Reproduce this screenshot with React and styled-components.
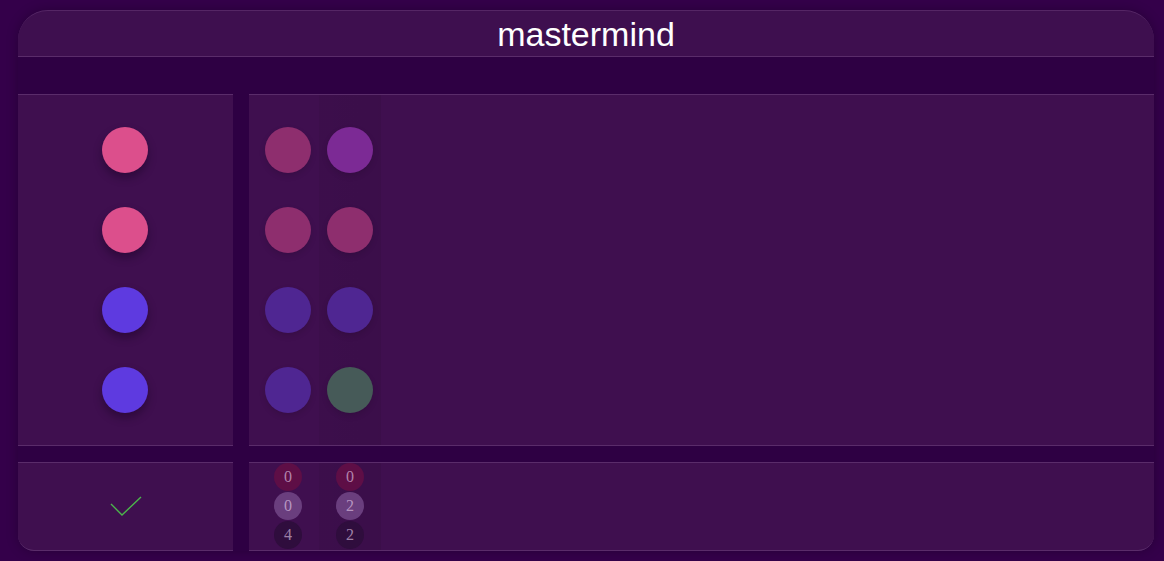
import styled, { createGlobalStyle } from "styled-components";

const GlobalStyle = createGlobalStyle`
  html, body {
    margin: 0;
    padding: 0;
    background: #34004a;
    font-family: "Liberation Sans", Arial, sans-serif;
  }
`;

const Board = styled.div`
  padding: 10px 10px 0 18px;
  height: 561px;
  box-sizing: border-box;
  overflow: hidden;
`;

const Frame = styled.div`
  background: #2e0043;
  display: flex;
  flex-direction: column;
  border-radius: 30px 30px 16px 16px;
  box-shadow: 0 0 12px rgba(0, 0, 0, 0.25);
`;

const Header = styled.header`
  height: 45px;
  background: #3e0f4f;
  border-top: 1px solid #552665;
  border-bottom: 1px solid #5a2c6a;
  border-radius: 30px 30px 0 0;
  display: flex;
  align-items: center;
  justify-content: center;
`;

const Title = styled.h1`
  margin: 0;
  font-weight: normal;
  font-size: 34px;
  color: #ffffff;
  line-height: 1;
  padding-top: 1px;
`;

const Row = styled.div`
  display: grid;
  grid-template-columns: 215px 905px;
  column-gap: 16px;
  margin-top: ${(p) => p.$top}px;
`;

const Panel = styled.div`
  background: #3f0f4f;
  border-top: 1px solid #5a2c6a;
  border-bottom: ${(p) => (p.$bottom ? "1px solid #5a2c6a" : "none")};
  border-radius: ${(p) => p.$radius || "0"};
  height: ${(p) => p.$h}px;
  box-sizing: border-box;
`;

const SecretPanel = styled(Panel)`
  display: flex;
  flex-direction: column;
  align-items: center;
  padding-top: 15px;
  padding-right: 1px;
`;

const HistoryPanel = styled(Panel)`
  display: flex;
  padding-left: 8px;
`;

const Column = styled.div`
  width: 62px;
  display: flex;
  flex-direction: column;
  align-items: center;
  padding-top: ${(p) => p.$pt || 0}px;
  background: ${(p) =>
    p.$shade
      ? "linear-gradient(90deg, rgba(0,0,0,0.05), rgba(0,0,0,0.07))"
      : "transparent"};
`;

const Slot = styled.div`
  height: 80px;
  width: 100%;
  display: flex;
  align-items: center;
  justify-content: center;
`;

const Peg = styled.div`
  width: 46px;
  height: 46px;
  border-radius: 50%;
  background: ${(p) => p.$color};
  box-shadow: ${(p) =>
    p.$muted ? "0 3px 6px rgba(0,0,0,0.12)" : "0 5px 8px rgba(20,0,30,0.4)"};
`;

const CheckCell = styled(Panel)`
  display: flex;
  align-items: center;
  justify-content: center;
`;

const Hint = styled.div`
  width: 28px;
  height: 28px;
  border-radius: 50%;
  margin-bottom: 1px;
  background: ${(p) => p.$bg};
  color: rgba(230, 205, 235, 0.62);
  font-family: "Liberation Serif", "Times New Roman", serif;
  font-size: 16px;
  display: flex;
  align-items: center;
  justify-content: center;
`;

const PINK = "#dc4f8c";
const BLUE = "#5e3ae0";

const secret = [PINK, PINK, BLUE, BLUE];

const guesses = [
  ["#8e2e6e", "#8e2e6e", "#4f2692", "#4f2692"],
  ["#7c2a95", "#8e2e6e", "#4f2692", "#465a58"],
];

const hints = [
  [0, 0, 4],
  [0, 2, 2],
];

const hintColors = ["#5e0e46", "#6a3e7e", "#2f0d3d"];

function CheckIcon() {
  return (
    <svg width="34" height="24" viewBox="0 0 34 24">
      <polyline
        points="2,9 13,20 32,2"
        fill="none"
        stroke="#4cb54c"
        strokeWidth="1.4"
      />
    </svg>
  );
}

export default function App() {
  return (
    <>
      <GlobalStyle />
      <Board>
        <Frame>
          <Header>
            <Title>mastermind</Title>
          </Header>
          <Row $top={37}>
            <SecretPanel $h={352} $bottom>
              {secret.map((c, i) => (
                <Slot key={i}>
                  <Peg $color={c} />
                </Slot>
              ))}
            </SecretPanel>
            <HistoryPanel $h={352} $bottom>
              {guesses.map((g, gi) => (
                <Column key={gi} $shade={gi % 2 === 1} $pt={15}>
                  {g.map((c, i) => (
                    <Slot key={i}>
                      <Peg $color={c} $muted />
                    </Slot>
                  ))}
                </Column>
              ))}
            </HistoryPanel>
          </Row>
          <Row $top={16}>
            <CheckCell $h={89} $bottom $radius="0 0 0 16px">
              <CheckIcon />
            </CheckCell>
            <HistoryPanel $h={89} $bottom $radius="0 0 16px 0">
              {hints.map((h, hi) => (
                <Column key={hi} $shade={hi % 2 === 1}>
                  {h.map((n, i) => (
                    <Hint key={i} $bg={hintColors[i]}>
                      {n}
                    </Hint>
                  ))}
                </Column>
              ))}
            </HistoryPanel>
          </Row>
        </Frame>
      </Board>
    </>
  );
}
